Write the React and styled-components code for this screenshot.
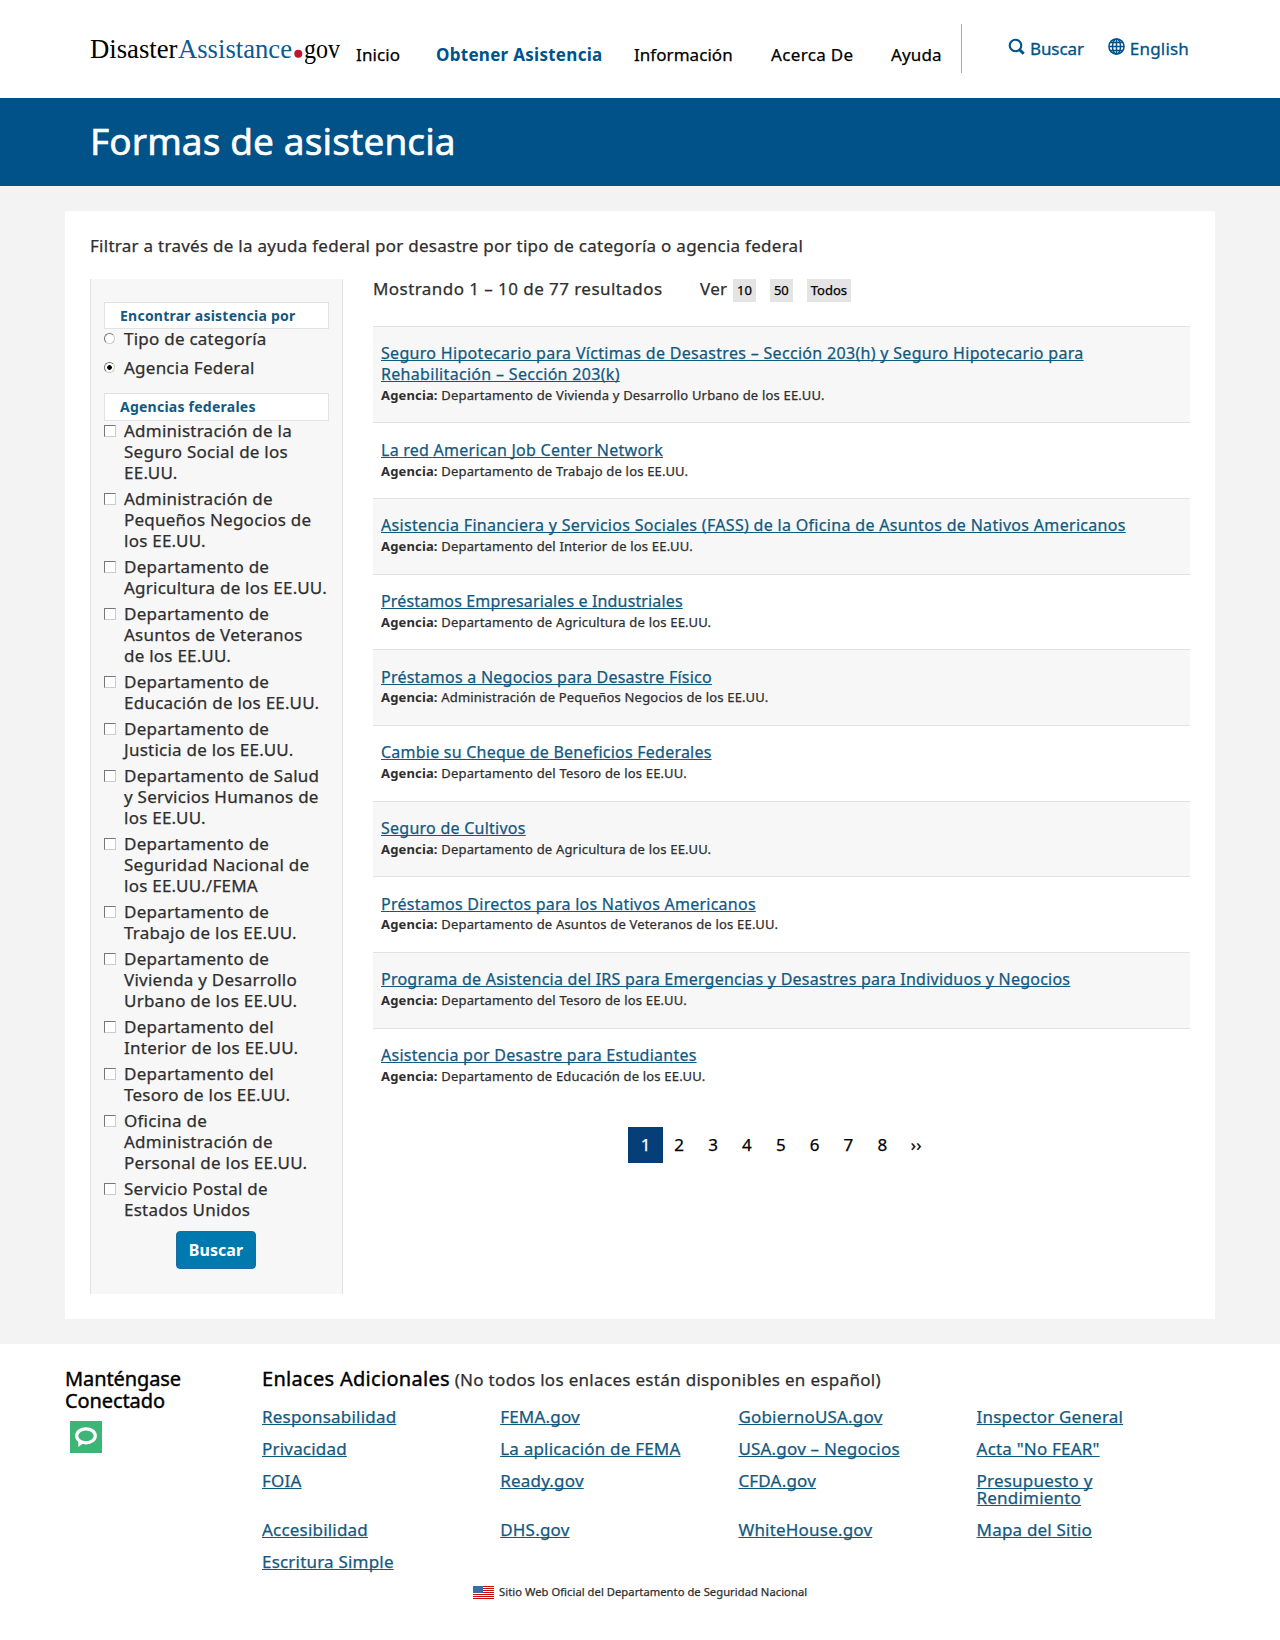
import React, { useState } from "react";
import styled, { createGlobalStyle } from "styled-components";

const GlobalStyle = createGlobalStyle`
  *, *::before, *::after { box-sizing: border-box; }
  body {
    margin: 0;
    background: #fff;
    color: #2e2e2e;
    font: 400 17px/21px "Noto Sans", "Open Sans", sans-serif;
    letter-spacing: 0.27px;
    -webkit-text-stroke: 0.25px;
  }
  h1, h2, p, ul, fieldset { margin: 0; padding: 0; border: 0; }
  ul { list-style: none; }
`;

const Link = styled.a`
  color: #12597f;
  text-decoration: underline;
  text-decoration-thickness: 1px;
  text-underline-offset: 1px;
  text-decoration-skip-ink: none;
`;

/* Header */
const Header = styled.header`
  display: flex;
  align-items: flex-start;
  height: 98px;
  padding-left: 90px;
`;
const LogoArt = styled.svg`
  display: block;
  width: 254px;
  height: 40px;
  margin: 30px 12px 0 0;
  font: 27.6px "Liberation Serif", "Times New Roman", serif;
  letter-spacing: 0;
`;
const Nav = styled.nav`
  display: grid;
  grid-template-columns: 80px 198px 137px 120px 70px;
  padding-top: 43px;
  line-height: 24px;
`;
const NavLink = styled.a`
  color: ${(p) => (p.$active ? "#00528a" : "#000")};
  font-weight: ${(p) => (p.$active ? 700 : 400)};
  letter-spacing: ${(p) => p.$track}px;
  -webkit-text-stroke: ${(p) => (p.$active ? "0" : "0.25px #000")};
`;
const Tools = styled.div`
  display: flex;
  gap: 24px;
  height: 49px;
  margin-top: 24px;
  padding: 12px 0 0 46px;
  border-left: 1px solid #aaa;
  line-height: 25px;
`;
const Tool = styled.a`
  display: flex;
  gap: 5px;
  color: #00528a;
  letter-spacing: ${(p) => p.$track}px;
  -webkit-text-stroke: 0.3px #00528a;
  svg { margin-top: 2px; }
`;

/* Banner and page body */
const Banner = styled.div`
  height: 88px;
  padding: 18px 90px 0;
  background: #005288;
`;
const Title = styled.h1`
  color: #fff;
  font-size: 37px;
  font-weight: 400;
  line-height: 50px;
  letter-spacing: 0.1px;
  -webkit-text-stroke: 0.6px #fff;
`;
const Body = styled.main`
  padding: 25px 65px;
  background: #f3f3f3;
`;
const Card = styled.div`
  height: 1108px;
  padding: 24px 25px 25px;
  background: #fff;
`;
const Intro = styled.p`
  height: 44px;
`;
const Columns = styled.div`
  display: grid;
  grid-template-columns: 253px 817px;
  column-gap: 30px;
`;

/* Filters */
const Filters = styled.form`
  height: 1015px;
  padding: 23px 13px 0;
  background: #f7f7f7;
  border: solid #e2e2e2;
  border-width: 0 1px;
`;
const FilterTitle = styled.h2`
  height: ${(p) => p.$h}px;
  margin-bottom: -1px;
  padding-left: 15px;
  border: 1px solid #e2e2e2;
  background: #fff;
  color: #12597f;
  font-size: 14px;
  font-weight: 700;
  line-height: 25px;
  letter-spacing: 0.24px;
  -webkit-text-stroke: 0;
`;
const Choices = styled.div`
  display: grid;
  row-gap: ${(p) => p.$gap}px;
  padding-bottom: ${(p) => p.$after}px;
  letter-spacing: 0.24px;
`;
const Choice = styled.label`
  display: grid;
  grid-template-columns: 12px 206px;
  column-gap: 8px;
`;
const Check = styled.input`
  appearance: none;
  width: 12px;
  height: 12px;
  margin: 5px 0 0;
  background: #fff;
  border: 1px solid;
  border-color: #777 #ccc #ccc #777;
  &:checked { background: #555; }
`;
const Radio = styled(Check)`
  width: 11px;
  height: 11px;
  border-radius: 50%;
  &:checked { background: radial-gradient(circle, #000 0 2px, #fff 2.6px); }
`;
const Submit = styled.button`
  display: block;
  width: 80px;
  height: 38px;
  margin: 11px auto 0 72px;
  padding: 0;
  border: 1px solid #1a6ba3;
  border-radius: 4px;
  background: #0079ae;
  color: #fff;
  font: 700 16px/36px "Noto Sans", sans-serif;
  letter-spacing: 0.05px;
  -webkit-text-stroke: 0;
`;

/* Results */
const ResultsBar = styled.div`
  display: flex;
  align-items: flex-start;
  height: 47px;
  line-height: 19px;
`;
const Count = styled.span`
  width: 327px;
  letter-spacing: 0.44px;
`;
const ShowLabel = styled.span`
  width: 33px;
`;
const Chip = styled.a`
  height: 23px;
  margin-right: 14px;
  padding: 0 4px;
  background: #e4e4e4;
  color: #000;
  font-size: 13px;
  line-height: 22px;
  letter-spacing: 0;
`;
const Row = styled.li`
  padding: 16.3px 8px 16.55px;
  border-top: 1px solid #e2e2e2;
  background: ${(p) => (p.$shaded ? "#f7f7f7" : "#fff")};
`;
const RowTitle = styled.div`
  font-size: 16px;
  line-height: 20.8px;
  letter-spacing: ${(p) => p.$track}px;
`;
const Agency = styled.div`
  font-size: 13px;
  line-height: 21px;
  letter-spacing: 0.19px;
  b { letter-spacing: 0.15px; -webkit-text-stroke: 0; }
`;
const Pager = styled.nav`
  display: flex;
  margin: 23.5px 0 0 255px;
`;
const PageLink = styled.a`
  width: ${(p) => (p.$current ? 35 : 33.85)}px;
  background: ${(p) => (p.$current ? "#063f78" : "transparent")};
  color: ${(p) => (p.$current ? "#fff" : "#000")};
  line-height: 36px;
  text-align: center;
  letter-spacing: 0;
  &:nth-child(n + 2) { padding-right: 1.4px; }
`;

/* Footer */
const Footer = styled.footer`
  padding: 25.2px 65px 0;
  line-height: 20.6px;
`;
const FooterColumns = styled.div`
  display: grid;
  grid-template-columns: 197px 1fr;
`;
const FooterTitle = styled.h2`
  display: inline;
  color: #000;
  font-size: 20px;
  font-weight: 400;
  letter-spacing: ${(p) => p.$track}px;
  -webkit-text-stroke: 0.4px;
`;
const Note = styled.span`
  letter-spacing: 0.31px;
`;
const Connect = styled.div`
  width: 130px;
  svg { display: block; margin: 9px 0 0 5px; }
`;
const Links = styled.div`
  display: grid;
  grid-template-columns: repeat(4, 200px);
  column-gap: 38.2px;
  row-gap: 15px;
  margin-top: 17.4px;
  line-height: 17px;
  letter-spacing: 0.2px;
`;
const Official = styled.div`
  display: flex;
  align-items: center;
  gap: 5px;
  height: 20px;
  margin: 12.6px 0 0 408px;
  font-size: 11.2px;
  letter-spacing: 0.05px;
`;

function Logo() {
  return (
    <LogoArt viewBox="0 0 254 40" aria-label="DisasterAssistance.gov">
      <text x="0" y="27.5" textLength="87.5" lengthAdjust="spacingAndGlyphs" fill="#000">Disaster</text>
      <text x="88" y="27.5" textLength="114" lengthAdjust="spacingAndGlyphs" fill="#0a5a94">Assistance</text>
      <circle cx="208.3" cy="23.8" r="4" fill="#c41230" />
      <text x="214" y="27.5" textLength="36" lengthAdjust="spacingAndGlyphs" fill="#000">gov</text>
    </LogoArt>
  );
}

function SearchIcon() {
  return (
    <svg width="17" height="17" viewBox="0 0 17 17" fill="none" stroke="#00528a">
      <circle cx="7.5" cy="7.5" r="5.8" strokeWidth="2.1" />
      <path d="M11.400 11.500l4.300 4.200" strokeWidth="3" />
    </svg>
  );
}

function GlobeIcon() {
  return (
    <svg width="17" height="17" viewBox="0 0 17 17" fill="none" stroke="#00528a" strokeWidth="1.5">
      <circle cx="8.5" cy="8.5" r="7.6" />
      <ellipse cx="8.5" cy="8.5" rx="4" ry="7.6" />
      <path d="M8.5 1v15M1 8.5h15M2.2 4.6h12.6M2.2 12.4h12.6" />
    </svg>
  );
}

function BubbleIcon() {
  return (
    <svg width="32" height="32" viewBox="0 0 32 32">
      <path fill="#3db576" d="M0 0h32v32H0z" />
      <ellipse cx="16" cy="14.8" rx="9.3" ry="7" fill="none" stroke="#fff" strokeWidth="3.2" />
      <path fill="#fff" d="M8.3 19.5v6.6l5-3.8z" />
    </svg>
  );
}

function FlagIcon() {
  return (
    <svg width="21" height="13" viewBox="0 0 21 13" shapeRendering="crispEdges">
      <path fill="#fff" d="M0 0h21v13H0z" />
      <path fill="#c80a0a" d="M0 0h21v1H0zM0 2h21v1H0zM0 4h21v1H0zM0 6h21v1H0zM0 8h21v1H0zM0 10h21v1H0zM0 12h21v1H0z" />
      <path fill="#3a6ea5" d="M0 0h10v7H0z" />
    </svg>
  );
}

const NAV = [
  ["Inicio", 0.12],
  ["Obtener Asistencia", 0.28],
  ["Información", 0.05],
  ["Acerca De", 0.35],
  ["Ayuda", 0.15],
];
const AGENCIES = [
  "Administración de la Seguro Social de los EE.UU.",
  "Administración de Pequeños Negocios de los EE.UU.",
  "Departamento de Agricultura de los EE.UU.",
  "Departamento de Asuntos de Veteranos de\u00a0los EE.UU.",
  "Departamento de Educación de los EE.UU.",
  "Departamento de Justicia de los EE.UU.",
  "Departamento de Salud y Servicios Humanos de los EE.UU.",
  "Departamento de Seguridad Nacional de los EE.UU./FEMA",
  "Departamento de Trabajo de los EE.UU.",
  "Departamento de Vivienda y Desarrollo Urbano de los EE.UU.",
  "Departamento del Interior de los EE.UU.",
  "Departamento del Tesoro de los EE.UU.",
  "Oficina de Administración de Personal de los EE.UU.",
  "Servicio Postal de Estados Unidos",
];
const RESULTS = [
  ["Seguro Hipotecario para Víctimas de Desastres – Sección 203(h) y Seguro Hipotecario para Rehabilitación – Sección 203(k)", "Departamento de Vivienda y Desarrollo Urbano de los EE.UU.", 0.31],
  ["La red American Job Center Network", "Departamento de Trabajo de los EE.UU.", 0.25],
  ["Asistencia Financiera y Servicios Sociales (FASS) de la Oficina de Asuntos de Nativos Americanos", "Departamento del Interior de los EE.UU.", 0.315],
  ["Préstamos Empresariales e Industriales", "Departamento de Agricultura de los EE.UU.", 0.14],
  ["Préstamos a Negocios para Desastre Físico", "Administración de Pequeños Negocios de los EE.UU.", 0.24],
  ["Cambie su Cheque de Beneficios Federales", "Departamento del Tesoro de los EE.UU.", 0.23],
  ["Seguro de Cultivos", "Departamento de Agricultura de los EE.UU.", 0.25],
  ["Préstamos Directos para los Nativos Americanos", "Departamento de Asuntos de Veteranos de los EE.UU.", 0.25],
  ["Programa de Asistencia del IRS para Emergencias y Desastres para Individuos y Negocios", "Departamento del Tesoro de los EE.UU.", 0.235],
  ["Asistencia por Desastre para Estudiantes", "Departamento de Educación de los EE.UU.", 0.25],
];
const PAGES = ["1", "2", "3", "4", "5", "6", "7", "8", "››"];
const FOOTER_LINKS = [
  "Responsabilidad", "FEMA.gov", "GobiernoUSA.gov", "Inspector General",
  "Privacidad", "La aplicación de FEMA", "USA.gov – Negocios", 'Acta "No FEAR"',
  "FOIA", "Ready.gov", "CFDA.gov", "Presupuesto y Rendimiento",
  "Accesibilidad", "DHS.gov", "WhiteHouse.gov", "Mapa del Sitio",
  "Escritura Simple",
];

export default function App() {
  const [mode, setMode] = useState("Agencia Federal");
  return (
    <>
      <GlobalStyle />
      <Header>
        <Logo />
        <Nav>
          {NAV.map(([name, track]) => (
            <NavLink key={name} $track={track} $active={name === "Obtener Asistencia"}>{name}</NavLink>
          ))}
        </Nav>
        <Tools>
          <Tool $track={-0.1}><SearchIcon />Buscar</Tool>
          <Tool $track={0.2}><GlobeIcon />English</Tool>
        </Tools>
      </Header>
      <Banner>
        <Title>Formas de asistencia</Title>
      </Banner>
      <Body>
        <Card>
          <Intro>Filtrar a través de la ayuda federal por desastre por tipo de categoría o agencia federal</Intro>
          <Columns>
            <Filters onSubmit={(e) => e.preventDefault()}>
              <FilterTitle $h={27}>Encontrar asistencia por</FilterTitle>
              <Choices $gap={8} $after={15}>
                {["Tipo de categoría", "Agencia Federal"].map((m) => (
                  <Choice key={m}>
                    <Radio type="radio" name="mode" checked={mode === m} onChange={() => setMode(m)} />
                    {m}
                  </Choice>
                ))}
              </Choices>
              <FilterTitle $h={28}>Agencias federales</FilterTitle>
              <Choices $gap={5} $after={0}>
                {AGENCIES.map((a) => (
                  <Choice key={a}>
                    <Check type="checkbox" />
                    {a}
                  </Choice>
                ))}
              </Choices>
              <Submit>Buscar</Submit>
            </Filters>
            <section>
              <ResultsBar>
                <Count>Mostrando 1 – 10 de 77 resultados</Count>
                <ShowLabel>Ver</ShowLabel>
                <Chip>10</Chip>
                <Chip>50</Chip>
                <Chip>Todos</Chip>
              </ResultsBar>
              <ul>
                {RESULTS.map(([title, agency, track], i) => (
                  <Row key={title} $shaded={i % 2 === 0}>
                    <RowTitle $track={track}><Link>{title}</Link></RowTitle>
                    <Agency><b>Agencia:</b> {agency}</Agency>
                  </Row>
                ))}
              </ul>
              <Pager>
                {PAGES.map((p) => (
                  <PageLink key={p} $current={p === "1"}>{p}</PageLink>
                ))}
              </Pager>
            </section>
          </Columns>
        </Card>
      </Body>
      <Footer>
        <FooterColumns>
          <Connect>
            <FooterTitle $track={-0.1}>Manténgase Conectado</FooterTitle>
            <BubbleIcon />
          </Connect>
          <div>
            <FooterTitle $track={0.3}>Enlaces Adicionales</FooterTitle>{" "}
            <Note>(No todos los enlaces están disponibles en español)</Note>
            <Links>
              {FOOTER_LINKS.map((l) => (
                <div key={l}><Link>{l}</Link></div>
              ))}
            </Links>
          </div>
        </FooterColumns>
        <Official>
          <FlagIcon />
          Sitio Web Oficial del Departamento de Seguridad Nacional
        </Official>
      </Footer>
    </>
  );
}
